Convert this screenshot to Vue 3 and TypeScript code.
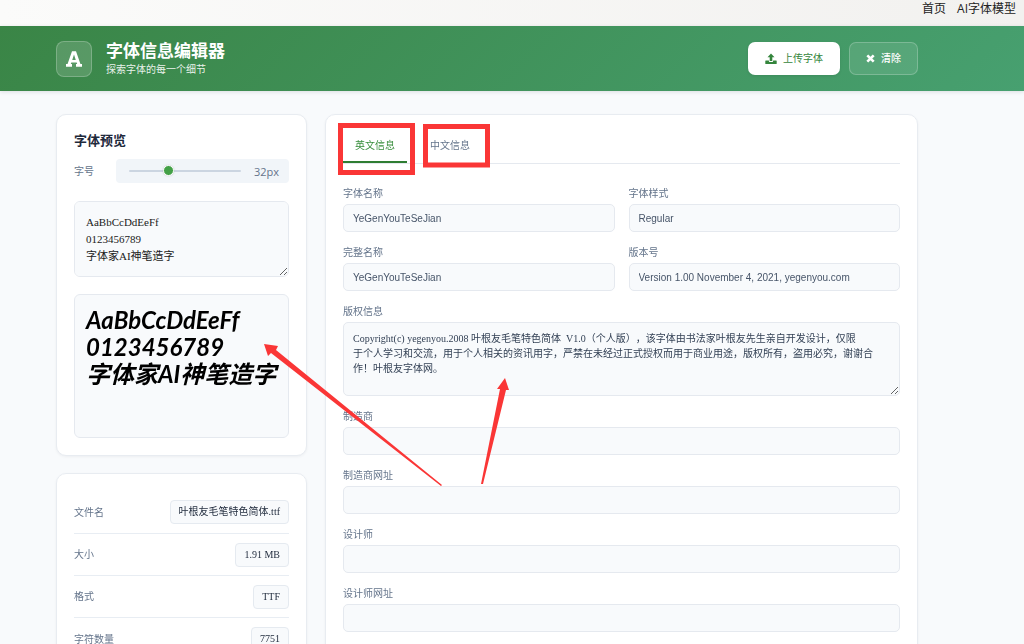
<script setup lang="ts">
import { computed, ref } from 'vue'

interface Field {
  id: string
  label: string
  value: string
  wide?: boolean
  multiline?: boolean
}

const fontSize = ref(32)
const sample = ref('AaBbCcDdEeFf\n0123456789\n字体家AI神笔造字')
const sampleLines = computed(() => sample.value.split('\n'))
const activeTab = ref('en')

const tabs = [
  { key: 'en', label: '英文信息' },
  { key: 'zh', label: '中文信息' },
]

const details = [
  { label: '文件名', value: '叶根友毛笔特色简体.ttf' },
  { label: '大小', value: '1.91 MB' },
  { label: '格式', value: 'TTF' },
  { label: '字符数量', value: '7751' },
]

const fields = ref<Field[]>([
  { id: 'family', label: '字体名称', value: 'YeGenYouTeSeJian' },
  { id: 'style', label: '字体样式', value: 'Regular' },
  { id: 'fullname', label: '完整名称', value: 'YeGenYouTeSeJian' },
  { id: 'version', label: '版本号', value: 'Version 1.00 November 4, 2021, yegenyou.com' },
  {
    id: 'copyright',
    label: '版权信息',
    value: [
      'Copyright(c) yegenyou.2008 叶根友毛笔特色简体  V1.0（个人版），该字体由书法家叶根友先生亲自开发设计，仅限',
      '于个人学习和交流，用于个人相关的资讯用字，严禁在未经过正式授权而用于商业用途，版权所有，盗用必究，谢谢合',
      '作！叶根友字体网。',
    ].join('\n'),
    wide: true,
    multiline: true,
  },
  { id: 'maker', label: '制造商', value: '', wide: true },
  { id: 'makerUrl', label: '制造商网址', value: '', wide: true },
  { id: 'designer', label: '设计师', value: '', wide: true },
  { id: 'designerUrl', label: '设计师网址', value: '', wide: true },
])

function clearAll() {
  fields.value.forEach((f) => (f.value = ''))
}
</script>

<template>
  <div class="page">
    <nav class="topnav">
      <a href="#home">首页</a>
      <a href="#model">AI字体模型</a>
    </nav>

    <header class="banner">
      <div class="logo">
        <svg viewBox="0 0 18 18" width="20" height="20" aria-hidden="true">
          <path
            fill="#fff"
            fill-rule="evenodd"
            d="M7.200 2h3.600l4 11.600h1.400V16h-5.400v-2.400h1.100l-.5-1.500H6.600l-.5 1.500h1.100V16H1.800v-2.400h1.400zM7.400 9.800h3.200L9 5z"
          />
        </svg>
      </div>
      <div class="heading">
        <h1>字体信息编辑器</h1>
        <p>探索字体的每一个细节</p>
      </div>
      <div class="actions">
        <button type="button" class="btn upload">
          <svg viewBox="0 0 12 12" width="12" height="12" aria-hidden="true">
            <path
              fill="currentColor"
              d="M6 .4 9.500 4.200H7.300V8H4.700V4.200H2.500zM.8 7.500h3.100v.8q0 .7.700.7h2.800q.7 0 .7-.7v-.8h3.100q.5 0 .5.500v2.600q0 .5-.5.500H.8q-.5 0-.5-.5V8q0-.5.5-.5z"
            />
          </svg>
          上传字体
        </button>
        <button type="button" class="btn clear" @click="clearAll">
          <svg viewBox="0 0 9 9" width="9" height="9" aria-hidden="true">
            <path d="M1.300 1.300l6.400 6.400M7.700 1.300L1.300 7.700" stroke="currentColor" stroke-width="2.600" />
          </svg>
          清除
        </button>
      </div>
    </header>

    <main class="content">
      <div class="side">
        <section class="card">
          <h2>字体预览</h2>
          <div class="size-row">
            <label for="size">字号</label>
            <div class="slider">
              <input id="size" v-model.number="fontSize" type="range" min="12" max="72" />
              <output for="size">{{ fontSize }}px</output>
            </div>
          </div>
          <textarea v-model="sample" class="sample" aria-label="预览文字"></textarea>
          <div class="preview">
            <p v-for="(line, i) in sampleLines" :key="i">{{ line }}</p>
          </div>
        </section>

        <section class="card">
          <dl class="details">
            <div v-for="d in details" :key="d.label" class="detail">
              <dt>{{ d.label }}</dt>
              <dd>{{ d.value }}</dd>
            </div>
          </dl>
        </section>
      </div>

      <section class="card info">
        <div class="tabs" role="tablist">
          <button
            v-for="t in tabs"
            :key="t.key"
            type="button"
            role="tab"
            class="tab"
            :class="{ active: activeTab === t.key }"
            :aria-selected="activeTab === t.key"
            @click="activeTab = t.key"
          >
            {{ t.label }}
          </button>
        </div>
        <form class="fields" @submit.prevent>
          <div v-for="f in fields" :key="f.id" class="field" :class="{ wide: f.wide }">
            <label :for="f.id">{{ f.label }}</label>
            <textarea v-if="f.multiline" :id="f.id" v-model="f.value"></textarea>
            <input v-else :id="f.id" v-model="f.value" type="text" />
          </div>
        </form>
      </section>
    </main>

    <svg class="marks" viewBox="0 0 1024 644" width="1024" height="644" aria-hidden="true">
      <g fill="none" stroke="#fa3636" stroke-width="5">
        <rect x="340.5" y="125.5" width="72" height="47" />
        <rect x="425.5" y="126.5" width="62" height="38.5" />
      </g>
      <g fill="#fa3636">
        <path d="M264 344L278 346L276 350L442 485L441 486L271 353L268 356Z" />
        <path d="M505 378L509 390L506 390L483 484L481 484L500 389L497 389Z" />
      </g>
    </svg>
  </div>
</template>

<style>
html {
  scrollbar-width: none;
  background: #f8fafc;
}
</style>

<style scoped>
* {
  box-sizing: border-box;
}

.page {
  position: relative;
  min-height: 100vh;
  overflow: hidden;
  background: #f8fafc;
  color: #1e293b;
  font-family: 'Open Sans', 'Noto Sans CJK SC', sans-serif;
  font-size: 10px;
  line-height: 15px;
}

h1,
h2,
p,
dl,
dd {
  margin: 0;
}

button,
input,
textarea {
  font: inherit;
  margin: 0;
}

.topnav {
  display: flex;
  justify-content: flex-end;
  gap: 11px;
  height: 26px;
  padding: 0 8px;
  background: linear-gradient(90deg, #fbfbfa, #f2f1ef);
  font-size: 12px;
  line-height: 18px;
}

.topnav a {
  color: #222;
  text-decoration: none;
}

.banner {
  display: flex;
  align-items: center;
  gap: 14px;
  height: 65px;
  padding: 0 106px 0 56px;
  background: linear-gradient(135deg, #3a8546, #47a070);
  box-shadow: 0 1px 4px rgba(15, 23, 42, 0.12);
  color: #fff;
}

.logo {
  display: grid;
  place-items: center;
  width: 36px;
  height: 36px;
  border: 1px solid rgba(255, 255, 255, 0.22);
  border-radius: 8px;
  background: rgba(255, 255, 255, 0.15);
}

h1 {
  font-size: 17px;
  font-weight: 700;
  line-height: 22px;
}

.heading p {
  color: rgba(255, 255, 255, 0.9);
}

.actions {
  display: flex;
  gap: 9px;
  margin-left: auto;
}

.btn {
  display: flex;
  align-items: center;
  gap: 6px;
  height: 33px;
  padding: 0 16px;
  border: 1px solid rgba(255, 255, 255, 0.22);
  border-radius: 7px;
}

.upload {
  background: #fff;
  color: #34853c;
  box-shadow: 0 1px 3px rgba(0, 0, 0, 0.1);
}

.clear {
  background: rgba(255, 255, 255, 0.1);
  color: #fff;
  font-weight: 500;
}

.content {
  display: grid;
  grid-template-columns: 251px 1fr;
  gap: 18px;
  padding: 23px 106px 23px 56px;
}

.side {
  display: flex;
  flex-direction: column;
  gap: 17px;
}

.card {
  padding: 17px;
  border: 1px solid #e8ecf1;
  border-radius: 10px;
  background: #fff;
  box-shadow: 0 1px 3px rgba(15, 23, 42, 0.05);
}

h2 {
  font-size: 13px;
  font-weight: 700;
  line-height: 16px;
}

.size-row {
  display: flex;
  align-items: center;
  justify-content: space-between;
  margin: 11px 0 18px;
  color: #64748b;
}

.slider {
  display: flex;
  align-items: center;
  gap: 13px;
  width: 173px;
  height: 24px;
  padding: 0 10px 0 13px;
  border-radius: 4px;
  background: #f1f5f9;
  font-size: 11px;
}

.slider input {
  flex: 1;
  min-width: 0;
  height: 12px;
  appearance: none;
  background: transparent;
}

.slider input::-webkit-slider-runnable-track {
  height: 2px;
  border-radius: 1px;
  background: #cbd5e1;
}

.slider input::-webkit-slider-thumb {
  appearance: none;
  width: 11px;
  height: 11px;
  margin-top: -5px;
  border: 1px solid #fff;
  border-radius: 50%;
  background: #43a047;
  box-shadow: 0 0 2px rgba(0, 0, 0, 0.15);
}

.sample,
.preview {
  display: block;
  width: 100%;
  border: 1px solid #e5e9ef;
  border-radius: 6px;
  background: #f8fafc;
}

.sample {
  height: 76px;
  padding: 12px 11px;
  color: #1a1a1a;
  font-family: 'Liberation Serif', 'Noto Sans CJK SC', serif;
  font-size: 11px;
  line-height: 17px;
  resize: vertical;
}

.preview {
  height: 144px;
  margin-top: 17px;
  padding: 11px;
  overflow: hidden;
  color: #000;
  font-family: Lato, 'Noto Sans CJK SC', sans-serif;
  font-size: 24px;
  font-style: italic;
  font-weight: 700;
  line-height: 27px;
  white-space: nowrap;
}

.detail {
  display: flex;
  align-items: center;
  justify-content: space-between;
  height: 42px;
  border-bottom: 1px solid #e8edf3;
  color: #64748b;
}

.detail:first-child {
  height: 43px;
}

.detail:last-child {
  border-bottom: 0;
}

dd {
  height: 24px;
  padding: 0 8px;
  border: 1px solid #e5eaf0;
  border-radius: 4px;
  background: #f8fafc;
  color: #1e293b;
  font-family: 'Liberation Serif', 'Noto Sans CJK SC', serif;
  line-height: 22px;
}

.tabs {
  display: flex;
  gap: 11px;
  height: 32px;
  border-bottom: 1px solid #e5e9ef;
}

.tab {
  padding: 0 12px 2px;
  border: 0;
  border-bottom: 2px solid transparent;
  background: none;
  color: #64748b;
}

.tab.active {
  border-bottom-color: #2e7d32;
  color: #388e3c;
}

.fields {
  display: grid;
  grid-template-columns: 1fr 1fr;
  gap: 13px 14px;
  margin-top: 22px;
}

.field {
  display: flex;
  flex-direction: column;
  gap: 3px;
  color: #64748b;
}

.wide {
  grid-column: 1 / -1;
}

.field input,
.field textarea {
  width: 100%;
  height: 28px;
  padding: 0 9px;
  border: 1px solid #e5e9ef;
  border-radius: 5px;
  background: #f8fafc;
  color: #475569;
  font-family: 'Liberation Sans', 'Noto Sans CJK SC', sans-serif;
}

.field textarea {
  height: 74px;
  padding: 8px 9px;
  color: #334155;
  font-family: 'Liberation Serif', 'Noto Sans CJK SC', serif;
  resize: vertical;
  text-spacing-trim: space-all;
}

.marks {
  position: absolute;
  top: 0;
  left: 0;
  pointer-events: none;
}
</style>
